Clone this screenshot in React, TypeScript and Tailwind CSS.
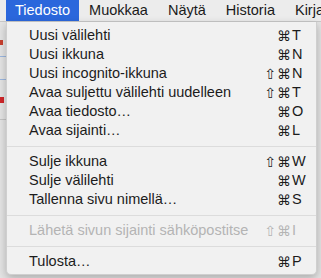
import { Fragment } from 'react';

type Item = { label: string; mods?: string; keyChar?: string; disabled?: boolean };

const groups: Item[][] = [
  [
    { label: 'Uusi välilehti', mods: '⌘', keyChar: 'T' },
    { label: 'Uusi ikkuna', mods: '⌘', keyChar: 'N' },
    { label: 'Uusi incognito-ikkuna', mods: '⇧⌘', keyChar: 'N' },
    { label: 'Avaa suljettu välilehti uudelleen', mods: '⇧⌘', keyChar: 'T' },
    { label: 'Avaa tiedosto…', mods: '⌘', keyChar: 'O' },
    { label: 'Avaa sijainti…', mods: '⌘', keyChar: 'L' },
  ],
  [
    { label: 'Sulje ikkuna', mods: '⇧⌘', keyChar: 'W' },
    { label: 'Sulje välilehti', mods: '⌘', keyChar: 'W' },
    { label: 'Tallenna sivu nimellä…', mods: '⌘', keyChar: 'S' },
  ],
  [{ label: 'Lähetä sivun sijainti sähköpostitse', mods: '⇧⌘', keyChar: 'I', disabled: true }],
  [{ label: 'Tulosta…', mods: '⌘', keyChar: 'P' }],
];

const menuBar = ['Tiedosto', 'Muokkaa', 'Näytä', 'Historia', 'Kirjanmerkit'];

const MenuRow = ({ item }: { item: Item }) => (
  <div
    className={`flex items-center h-[19px] pl-[22px] pr-[7px] ${
      item.disabled ? 'text-[#b4b4b4]' : 'text-[#1c1c1c]'
    }`}
  >
    <span className="flex-1 whitespace-nowrap">{item.label}</span>
    <span className="flex items-center">
      <span className="w-[40px] text-right font-['DejaVu_Sans'] text-[14px] tracking-[1px]">{item.mods}</span>
      <span className="w-[17px] text-left">{item.keyChar}</span>
    </span>
  </div>
);

export default function App() {
  return (
    <div className="relative w-[321px] h-[278px] overflow-hidden bg-[#e4e4e4] font-['Liberation_Sans',sans-serif] text-[14.5px] leading-none">
      {/* menu bar */}
      <div className="flex h-[22px] pl-[6px] bg-[#ececec] border-b border-[#c9c9c9] whitespace-nowrap">
        {menuBar.map((m, i) => (
          <div
            key={m}
            className={`flex items-center h-full shrink-0 ${
              i === 0 ? 'bg-[#2b67dc] text-white px-[9px]' : 'text-[#1a1a1a] px-[10px]'
            }`}
          >
            {m}
          </div>
        ))}
      </div>

      {/* window content peeking out on the left */}
      <div className="flex flex-col w-[6px]">
        <div className="h-[18px]" />
        <div className="h-[5px] w-[3px] bg-[#c8402e]" />
        <div className="h-[11px]" />
        <div className="h-[1px] bg-[#9bb7e0]" />
        <div className="h-[22px]" />
        <div className="h-[1px] bg-[#9bb7e0]" />
        <div className="h-[17px]" />
        <div className="h-[6px] w-[4px] bg-[#d0262a]" />
        <div className="h-[16px]" />
        <div className="h-[1px] bg-[#c4c4c4]" />
      </div>

      {/* dropdown */}
      <div className="absolute left-[6px] top-[22px] w-[311px] pt-[4px] pb-[3px] bg-[#f1f1f1] rounded-b-[5px] border-x border-b border-[#cfcfcf] shadow-[0_3px_8px_rgba(0,0,0,0.25)]">
        {groups.map((g, gi) => (
          <Fragment key={gi}>
            {gi > 0 && (
              <div className="h-[12px] flex items-center">
                <div className="h-[1px] w-full bg-[#dcdcdc]" />
              </div>
            )}
            {g.map((item) => (
              <MenuRow key={item.label} item={item} />
            ))}
          </Fragment>
        ))}
      </div>
    </div>
  );
}
